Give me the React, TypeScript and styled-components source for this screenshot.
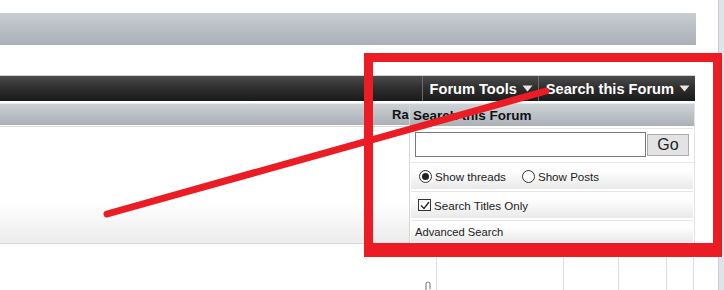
import React from 'react';
import styled, { createGlobalStyle } from 'styled-components';

const GlobalStyle = createGlobalStyle`
  html, body {
    margin: 0;
    padding: 0;
    background: #fff;
    font-family: "Liberation Sans", Arial, sans-serif;
  }
`;

const Page = styled.div`
  position: relative;
  width: 724px;
  height: 290px;
  overflow: hidden;
  display: flex;
  background: #fff;
`;

const Main = styled.div`
  position: relative;
  width: 718px;
  padding-top: 13px;
  display: flex;
  flex-direction: column;
`;

const Gutter = styled.div`
  flex: 1;
  border-left: 1px solid #c9cdd2;
  background: #dfe4ea;
`;

const TopBar = styled.div`
  width: 696px;
  height: 32px;
  background: linear-gradient(#c8cdd2, #aab0b6);
`;

const NavBar = styled.div`
  margin-top: 30px;
  width: 695px;
  height: 26px;
  border-top: 1px solid #d2d2d2;
  background: linear-gradient(#4b4b4b, #303030 45%, #1a1a1a);
  display: flex;
  justify-content: flex-end;
`;

const NavItem = styled.div`
  height: 100%;
  display: flex;
  align-items: center;
  gap: 5px;
  padding: 0 5px 0 7px;
  border-left: 1px solid #6a6a6a;
  color: #fff;
  font-weight: bold;
  font-size: 14.6px;
  white-space: nowrap;
`;

const HeaderRow = styled.div`
  margin-top: 2px;
  border-top: 1px solid #e8e8e8;
  width: 695px;
  height: 22px;
  background: linear-gradient(#ccd0d4, #aab0b6);
  display: flex;
  align-items: center;
  padding-left: 392px;
  box-sizing: border-box;
  font-size: 13px;
  font-weight: bold;
  color: #111;
`;

const ListArea = styled.div`
  margin-top: 1px;
  width: 695px;
  height: 117px;
  border-top: 1px solid #dcdcdc;
  border-bottom: 1px solid #d8d8d8;
  background: linear-gradient(#fff 65%, #ececec);
`;

const ThreadRow = styled.div`
  width: 695px;
  height: 46px;
  display: grid;
  grid-template-columns: 437px 127px 55px 48px 27px;
`;

const Cell = styled.div`
  position: relative;
  border-right: 1px solid #dedede;
  display: flex;
  justify-content: flex-end;
  padding: 37px 4px 0 0;
  box-sizing: border-box;
`;

const Popup = styled.div`
  position: absolute;
  left: 409px;
  top: 104px;
  width: 286px;
  height: 139px;
  box-sizing: border-box;
  background: #fff;
  border-left: 1px solid #d6d6d6;
  border-right: 1px solid #e2e2e2;
  display: flex;
  flex-direction: column;
  gap: 2px;
`;

const PopupHeader = styled.div`
  height: 22px;
  display: flex;
  align-items: center;
  padding-left: 3px;
  background: linear-gradient(#ced2d6, #abb1b7);
  font-size: 13.5px;
  font-weight: bold;
  color: #111;
`;

const PopupRow = styled.div<{ h: number; shade?: boolean; indent?: number }>`
  height: ${({ h }) => h}px;
  margin: 0 1px;
  box-sizing: border-box;
  border-top: 1px solid #e6e6e6;
  display: flex;
  align-items: center;
  padding-left: ${({ indent }) => indent ?? 4}px;
  gap: 6px;
  font-size: 11.2px;
  color: #222;
  background: ${({ shade }) => (shade ? 'linear-gradient(#fefefe 30%, #e9e9e9)' : '#fff')};
`;

const SearchInput = styled.input`
  width: 231px;
  height: 25px;
  margin: 0;
  box-sizing: border-box;
  border: 1px solid #7a7a7a;
  background: #fff;
  outline: none;
`;

const GoButton = styled.button`
  width: 42px;
  height: 22px;
  margin-left: -5px;
  padding: 0;
  box-sizing: border-box;
  border: 1px solid #adadad;
  background: #e3e3e3;
  color: #222;
  font-family: "Liberation Sans", Arial, sans-serif;
  font-size: 16px;
`;

const Choice = styled.label<{ gap?: number }>`
  display: flex;
  align-items: center;
  gap: 3px;
  font-size: 11.6px;
  margin-right: ${({ gap }) => gap || 0}px;
`;

const Radio = styled.span<{ on?: boolean }>`
  width: 13px;
  height: 13px;
  box-sizing: border-box;
  border: 1px solid #333;
  border-radius: 50%;
  background: #fff;
  display: flex;
  align-items: center;
  justify-content: center;
  &::after {
    content: '';
    width: 7px;
    height: 7px;
    border-radius: 50%;
    background: ${({ on }) => (on ? '#222' : 'transparent')};
  }
`;

const Box = styled.span`
  width: 13px;
  height: 12px;
  box-sizing: border-box;
  border: 1px solid #333;
  background: #fff;
  display: flex;
  align-items: center;
  justify-content: center;
`;

const Annotation = styled.svg`
  position: absolute;
  left: 0;
  top: 0;
  pointer-events: none;
`;

const Arrow = () => (
  <svg width="11" height="7" viewBox="0 0 11 7">
    <path d="M0.5 0.5 H10.5 L5.5 6.5 Z" fill="#e6e6e6" />
  </svg>
);

const App = () => {
  return (
    <Page>
      <GlobalStyle />
      <Main>
        <TopBar />
        <NavBar>
          <NavItem>
            Forum Tools <Arrow />
          </NavItem>
          <NavItem>
            Search this Forum <Arrow />
          </NavItem>
        </NavBar>
        {/* only the start of the column title shows beside the popup */}
        <HeaderRow>Ra</HeaderRow>
        <ListArea />
        <ThreadRow>
          <Cell>
            <svg width="8" height="10" viewBox="0 0 8 10">
              <path d="M2 9 V3 a2 2 0 0 1 4 0 V8" stroke="#888" strokeWidth="1.2" fill="none" />
            </svg>
          </Cell>
          <Cell />
          <Cell />
          <Cell />
          <Cell />
        </ThreadRow>

        <Popup>
          <PopupHeader>Search this Forum</PopupHeader>
          <PopupRow h={32}>
            <SearchInput type="text" />
            <GoButton>Go</GoButton>
          </PopupRow>
          <PopupRow h={27} shade indent={8}>
            <Choice gap={10}>
              <Radio on /> Show threads
            </Choice>
            <Choice>
              <Radio /> Show Posts
            </Choice>
          </PopupRow>
          <PopupRow h={27} shade indent={7}>
            <Choice>
              <Box>
                <svg width="10" height="9" viewBox="0 0 10 9">
                  <path d="M1 4.5 L4 7.5 L9 1" stroke="#222" strokeWidth="1.3" fill="none" />
                </svg>
              </Box>
              Search Titles Only
            </Choice>
          </PopupRow>
          <PopupRow h={22} shade>Advanced Search</PopupRow>
        </Popup>
      </Main>
      <Gutter />

      <Annotation width="724" height="290" viewBox="0 0 724 290">
        <g fill="#ec1c24">
          <rect x="364" y="53" width="9" height="204" />
          <rect x="364" y="53" width="358" height="9" />
          <rect x="713" y="53" width="9" height="204" />
          <rect x="364" y="243" width="358" height="14" />
        </g>
        <line x1="107" y1="214" x2="546" y2="91" stroke="#ec1c24" strokeWidth="7" strokeLinecap="round" />
      </Annotation>
    </Page>
  );
};

export default App;
